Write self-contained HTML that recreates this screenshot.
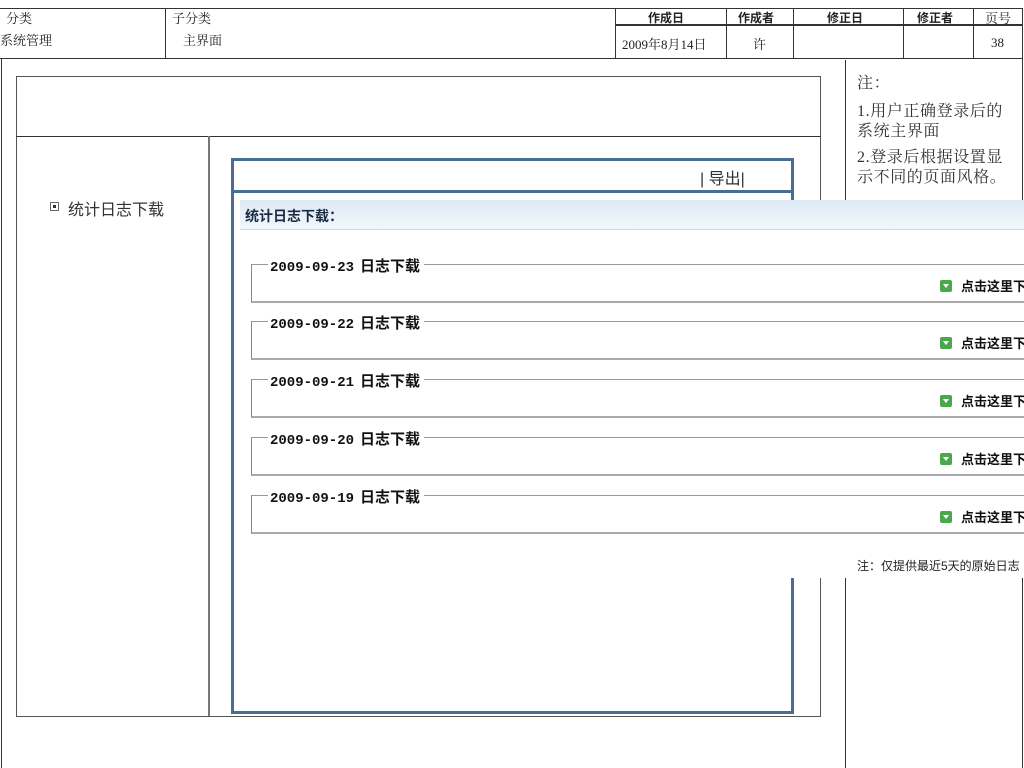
<!DOCTYPE html>
<html><head><meta charset="utf-8">
<style>
*{margin:0;padding:0;box-sizing:border-box}
body{width:1024px;height:768px;overflow:hidden;background:#fff;position:relative;font-family:"Liberation Serif","Noto Serif CJK SC",serif;color:#222}
.a{position:absolute}
.h{position:absolute;height:1px;background:#333}
.v{position:absolute;width:1px;background:#333}
.t{position:absolute;font-size:13px;white-space:nowrap}
.b{font-family:"Liberation Sans","Noto Sans CJK SC",sans-serif;font-weight:bold}
.fs{position:absolute;left:251px;width:800px;height:39px;border:1px solid #999;border-left-color:#888;border-bottom:2px solid #aaa}
.lg{position:absolute;left:268px;background:#fff;padding:0 4px 0 2px;font-family:"Liberation Mono","Noto Sans CJK SC",monospace;font-weight:bold;font-size:14px;color:#111}
.lg span{font-family:"Liberation Sans","Noto Sans CJK SC",sans-serif;font-size:15px;margin-left:6px}
.dl{position:absolute;left:940px;font-family:"Liberation Sans","Noto Sans CJK SC",sans-serif;font-weight:bold;font-size:13px;color:#111;white-space:nowrap}
.ic{display:inline-block;width:12px;height:12px;background:#4aa84a;border-radius:2px;vertical-align:-1px;margin-right:9px;position:relative}
.ic:after{content:"";position:absolute;left:3px;top:4px;border-left:3px solid transparent;border-right:3px solid transparent;border-top:4px solid #fff}
</style></head><body>
<div class="h" style="left:0;top:8px;width:1023px"></div>
<div class="h" style="left:615px;top:24px;width:408px;height:2px"></div>
<div class="h" style="left:0;top:58px;width:1023px"></div>
<div class="v" style="left:165px;top:8px;height:50px"></div>
<div class="v" style="left:615px;top:8px;height:50px"></div>
<div class="v" style="left:726px;top:8px;height:50px"></div>
<div class="v" style="left:793px;top:8px;height:50px"></div>
<div class="v" style="left:903px;top:8px;height:50px"></div>
<div class="v" style="left:973px;top:8px;height:50px"></div>
<div class="v" style="left:1022px;top:8px;height:760px"></div>
<div class="v" style="left:1px;top:58px;height:710px"></div>
<div class="t" style="left:6px;top:8px">分类</div>
<div class="t" style="left:0;top:30px">系统管理</div>
<div class="t" style="left:172px;top:8px">子分类</div>
<div class="t" style="left:183px;top:30px">主界面</div>
<div class="t b" style="left:648px;top:9px;font-size:12px">作成日</div>
<div class="t b" style="left:738px;top:9px;font-size:12px">作成者</div>
<div class="t b" style="left:827px;top:9px;font-size:12px">修正日</div>
<div class="t b" style="left:917px;top:9px;font-size:12px">修正者</div>
<div class="t" style="left:985px;top:8px">页号</div>
<div class="t" style="left:622px;top:34px;font-size:13px">2009年8月14日</div>
<div class="t" style="left:753px;top:34px">许</div>
<div class="t" style="left:991px;top:35px">38</div>
<div class="a" style="left:16px;top:76px;width:805px;height:641px;border:1px solid #555"></div>
<div class="h" style="left:16px;top:136px;width:805px"></div>
<div class="v" style="left:208px;top:136px;height:580px;background:#777;width:2px"></div>
<div class="v" style="left:845px;top:60px;height:708px"></div>
<div class="a" style="left:50px;top:202px;width:9px;height:9px;border:1px solid #666"><div class="a" style="left:2px;top:2px;width:3px;height:3px;background:#333"></div></div>
<div class="t" style="left:68px;top:196px;font-size:16px;font-family:'Liberation Sans','Noto Sans CJK SC',sans-serif;color:#333">统计日志下载</div>
<div class="a" style="left:231px;top:158px;width:563px;height:556px;border:3px solid #4a6d94"></div>
<div class="a" style="left:231px;top:190px;width:563px;height:3px;background:#4a6d94"></div>
<div class="t" style="left:700px;top:165px;font-size:16px;font-family:'Liberation Sans','Noto Sans CJK SC',sans-serif;color:#333">| 导出|</div>
<div class="a" style="left:857px;top:74px;font-size:16px;letter-spacing:0.6px;line-height:20px;color:#333;font-family:'Liberation Serif','Noto Serif CJK SC',serif;white-space:nowrap">
<div>注：</div>
<div style="margin-top:8px">1.用户正确登录后的<br>系统主界面</div>
<div style="margin-top:6px">2.登录后根据设置显<br>示不同的页面风格。</div>
</div>
<div class="a" style="left:240px;top:200px;width:784px;height:378px;background:#fff"></div>
<div class="a" style="left:240px;top:200px;width:784px;height:30px;background:linear-gradient(#dde9f6,#f3f7fb);border-bottom:1px solid #cfd9e4"></div>
<div class="t b" style="left:245px;top:206px;font-size:14px;color:#1a2a44">统计日志下载：</div>
<div class="fs" style="top:264px"></div>
<div class="lg" style="top:255px">2009-09-23<span>日志下载</span></div>
<div class="dl" style="top:276px"><i class="ic"></i>点击这里下载</div>
<div class="fs" style="top:321px"></div>
<div class="lg" style="top:312px">2009-09-22<span>日志下载</span></div>
<div class="dl" style="top:333px"><i class="ic"></i>点击这里下载</div>
<div class="fs" style="top:379px"></div>
<div class="lg" style="top:370px">2009-09-21<span>日志下载</span></div>
<div class="dl" style="top:391px"><i class="ic"></i>点击这里下载</div>
<div class="fs" style="top:437px"></div>
<div class="lg" style="top:428px">2009-09-20<span>日志下载</span></div>
<div class="dl" style="top:449px"><i class="ic"></i>点击这里下载</div>
<div class="fs" style="top:495px"></div>
<div class="lg" style="top:486px">2009-09-19<span>日志下载</span></div>
<div class="dl" style="top:507px"><i class="ic"></i>点击这里下载</div>
<div class="t" style="left:857px;top:557px;font-size:12px;font-family:'Liberation Sans','Noto Sans CJK SC',sans-serif;color:#222">注：仅提供最近5天的原始日志</div>
</body></html>
